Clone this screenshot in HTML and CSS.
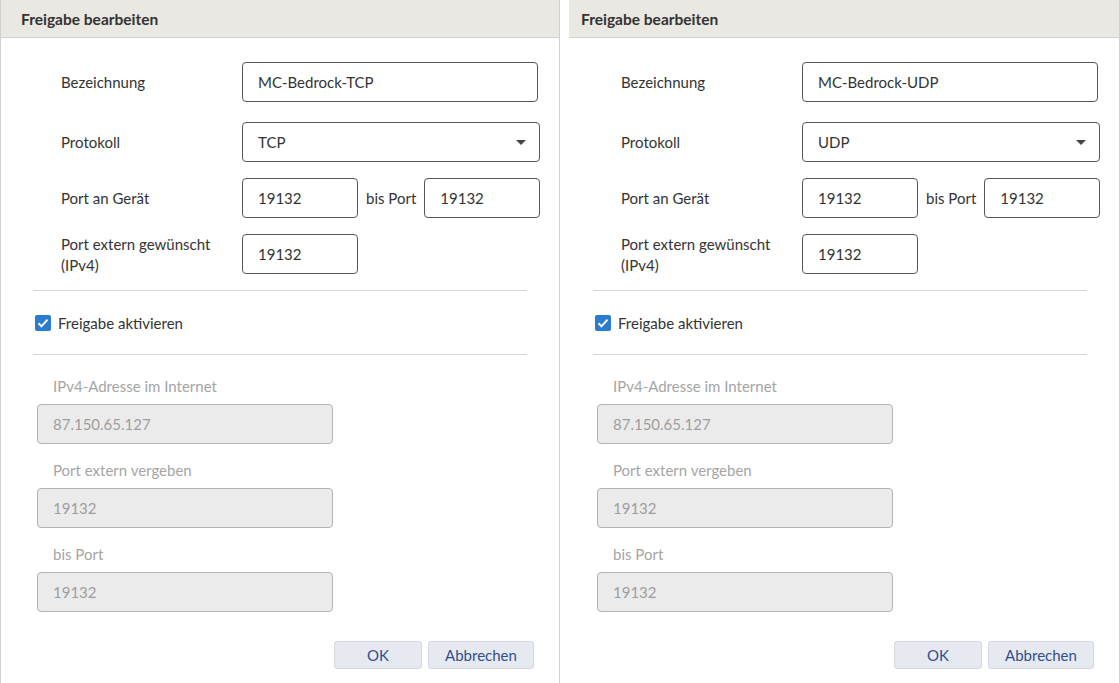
FILE: index.html
```html
<!DOCTYPE html>
<html lang="de">
<head>
    <meta charset="UTF-8">
    <meta name="viewport" content="width=device-width, initial-scale=1.0">
    <title>Freigabe bearbeiten</title>
    <link rel="stylesheet" href="styles.css">
</head>
<body>
    <div class="panels">
        <div class="panel">
            <div class="panel-header">Freigabe bearbeiten</div>
            <div class="form-grid">
                <label class="form-label">Bezeichnung</label>
                <div class="field"><div class="input wide">MC-Bedrock-TCP</div></div>

                <label class="form-label">Protokoll</label>
                <div class="field">
                    <div class="input select">TCP<span class="caret"></span></div>
                </div>

                <label class="form-label">Port an Gerät</label>
                <div class="field">
                    <div class="input small">19132</div>
                    <span class="between">bis Port</span>
                    <div class="input small">19132</div>
                </div>

                <label class="form-label">Port extern gewünscht<br>(IPv4)</label>
                <div class="field top"><div class="input small">19132</div></div>
            </div>

            <hr class="divider">
            <div class="check-row">
                <span class="checkbox">
                    <svg width="16" height="16" viewBox="0 0 16 16"><path d="M3.5 8.3l3 3 6-6.6" fill="none" stroke="#fff" stroke-width="2"/></svg>
                </span>
                <span>Freigabe aktivieren</span>
            </div>
            <hr class="divider">

            <div class="readonly">
                <div class="ro-label">IPv4-Adresse im Internet</div>
                <div class="input disabled">87.150.65.127</div>
                <div class="ro-label">Port extern vergeben</div>
                <div class="input disabled">19132</div>
                <div class="ro-label">bis Port</div>
                <div class="input disabled">19132</div>
            </div>

            <div class="actions">
                <button class="btn ok">OK</button>
                <button class="btn cancel">Abbrechen</button>
            </div>
        </div>

        <div class="panel second">
            <div class="panel-header">Freigabe bearbeiten</div>
            <div class="form-grid">
                <label class="form-label">Bezeichnung</label>
                <div class="field"><div class="input wide">MC-Bedrock-UDP</div></div>

                <label class="form-label">Protokoll</label>
                <div class="field">
                    <div class="input select">UDP<span class="caret"></span></div>
                </div>

                <label class="form-label">Port an Gerät</label>
                <div class="field">
                    <div class="input small">19132</div>
                    <span class="between">bis Port</span>
                    <div class="input small">19132</div>
                </div>

                <label class="form-label">Port extern gewünscht<br>(IPv4)</label>
                <div class="field top"><div class="input small">19132</div></div>
            </div>

            <hr class="divider">
            <div class="check-row">
                <span class="checkbox">
                    <svg width="16" height="16" viewBox="0 0 16 16"><path d="M3.5 8.3l3 3 6-6.6" fill="none" stroke="#fff" stroke-width="2"/></svg>
                </span>
                <span>Freigabe aktivieren</span>
            </div>
            <hr class="divider">

            <div class="readonly">
                <div class="ro-label">IPv4-Adresse im Internet</div>
                <div class="input disabled">87.150.65.127</div>
                <div class="ro-label">Port extern vergeben</div>
                <div class="input disabled">19132</div>
                <div class="ro-label">bis Port</div>
                <div class="input disabled">19132</div>
            </div>

            <div class="actions">
                <button class="btn ok">OK</button>
                <button class="btn cancel">Abbrechen</button>
            </div>
        </div>
    </div>
</body>
</html>
```

FILE: styles.css
```css
body {
    margin: 0;
    font-family: Lato, "Open Sans", sans-serif;
    font-size: 15px;
    color: #333;
    background-color: #fff;
}

.panels {
    display: flex;
    height: 683px;
}

.panel {
    width: 560px;
    box-sizing: border-box;
    border-left: 1px solid #d0d0d0;
    border-right: 1px solid #d0d0d0;
    display: flex;
    flex-direction: column;
}

/* second panel shares the divider line with the first one */
.panel.second {
    border-left-color: #fff;
}

.panel-header {
    height: 37px;
    line-height: 38px;
    padding-left: 20px;
    background-color: #e9e8e2;
    border-bottom: 1px solid #d2d2d2;
    font-weight: bold;
    font-size: 15.5px;
    color: #333;
}

.panel.second .panel-header {
    margin-left: 8px;
    padding-left: 12px;
}

.form-grid {
    display: grid;
    grid-template-columns: 181px 1fr;
    row-gap: 16px;
    align-items: center;
    padding: 24px 0 0 60px;
}

.form-grid .form-label:first-child,
.form-grid .field:nth-child(2) {
    margin-bottom: 4px;
}

.form-label {
    line-height: 21px;
}

.field {
    display: flex;
    align-items: center;
}

.field.top {
    align-self: start;
}

.input {
    box-sizing: border-box;
    height: 40px;
    line-height: 38px;
    padding-left: 15px;
    border: 1px solid #555;
    border-radius: 4px;
    background-color: #fff;
}

.input.wide {
    width: 296px;
}

.input.select {
    width: 298px;
    position: relative;
}

.caret {
    position: absolute;
    right: 13px;
    top: 17px;
    border-left: 5px solid transparent;
    border-right: 5px solid transparent;
    border-top: 5px solid #444;
}

.input.small {
    width: 116px;
}

.between {
    margin: 0 8px 0 8px;
}

.divider {
    border: none;
    border-top: 1px solid #d6d6d6;
    margin: 0 32px;
}

.form-grid + .divider {
    margin-top: 14px;
}

.check-row {
    height: 63px;
    display: flex;
    align-items: center;
    padding-left: 34px;
}

.checkbox {
    width: 16px;
    height: 16px;
    border-radius: 2px;
    background-color: #2b7bd1;
    margin-right: 7px;
    display: flex;
}

.readonly {
    padding: 21px 0 0 36px;
}

.ro-label {
    color: #a5a5a5;
    line-height: 20px;
    padding-left: 16px;
    margin-bottom: 8px;
}

.input.disabled {
    width: 296px;
    background-color: #ebebeb;
    border-color: #b4b4b4;
    color: #9e9e9e;
    margin-bottom: 16px;
}

.actions {
    display: flex;
    justify-content: flex-end;
    gap: 6px;
    padding: 13px 25px 0 0;
}

.btn {
    height: 28px;
    border: 1px solid #d3d8df;
    border-radius: 3px;
    background-color: #e6eaf0;
    color: #2f4f8c;
    font-family: Lato, "Open Sans", sans-serif;
    font-size: 15px;
    padding: 0;
}

.btn.ok {
    width: 88px;
}

.btn.cancel {
    width: 106px;
}
```
